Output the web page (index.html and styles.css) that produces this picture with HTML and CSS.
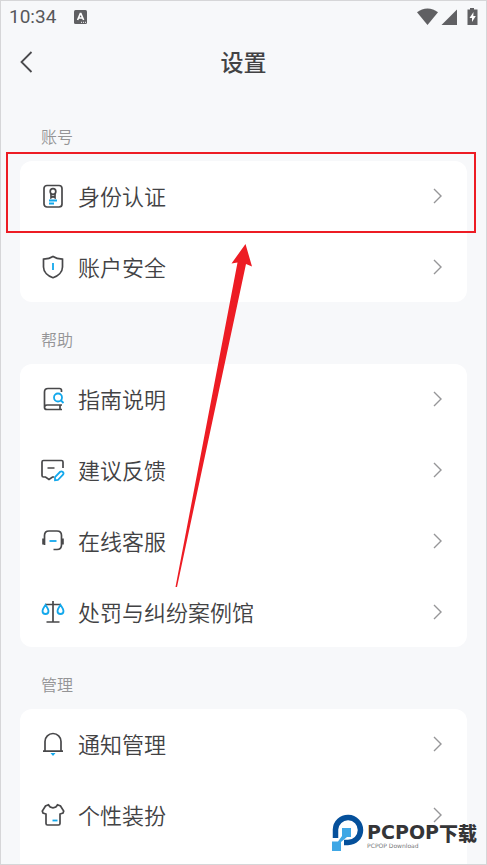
FILE: index.html
```html
<!DOCTYPE html>
<html lang="zh-CN">
<head>
<meta charset="utf-8">
<meta name="viewport" content="width=device-width, initial-scale=1">
<title>设置</title>
<link rel="stylesheet" href="styles.css">
</head>
<body>
<div class="screen">
  <div class="status">
    <span class="time">10:34</span>
    <svg class="status-app" width="13" height="14" viewBox="0 0 13 14"><rect width="13" height="14" rx="1.5" fill="#606063"/><path d="M3.6 10 6.3 3.6h.6L9.6 10M4.6 8h4" fill="none" stroke="#fff" stroke-width="1.6"/><path d="M7 12.3h1M9 12.3h1M11 12.3h1" stroke="#fff" stroke-width="1"/></svg>
    <svg class="status-icons" width="62" height="18" viewBox="0 0 62 18"><g fill="#606063"><path d="M0 4.300C6-.8 15-.8 21 4.300L10.500 17Z"/><path d="M40 1.500V17H24.500Z"/><path d="M53 0h4v1.500h3.500V17h-10V1.500H53Z"/></g><path d="M56.500 4 52.500 10h2.500v4l3.800-6h-2.500Z" fill="#fff"/></svg>
  </div>
  <header class="header">
    <button class="back" aria-label="返回"><svg width="14" height="22" viewBox="0 0 14 22"><path d="M12.500 1 2.500 11l10 10" fill="none" stroke="#4a4a4d" stroke-width="1.800"/></svg></button>
    <h1 class="title">设置</h1>
  </header>
  <main class="content">
    <h2 class="label">账号</h2>
    <nav class="card">
      <a class="row row-marked" href="#">
        <svg class="icon" viewBox="0 0 24 24"><rect x="3" y="1.500" width="18" height="21.500" rx="3"/><circle cx="12" cy="7.500" r="2.800"/><path d="M10 9.800v4L12 12.600l2 1.200v-4"/><path class="blue" d="M8 16.500h8M8 19.500h5"/></svg>
        <span class="name">身份认证</span><svg class="chevron" viewBox="0 0 10 16"><path d="M1 1 8 8 1 15"/></svg>
      </a>
      <a class="row" href="#">
        <svg class="icon" viewBox="0 0 24 24"><path d="M12 1.500C9.500 3.200 6 4 2.500 4.200V12c0 5 4.500 9 9.500 10.700C17 21 21.500 17 21.500 12V4.200C18 4 14.500 3.200 12 1.500Z"/><path class="blue" d="M12 8v7"/></svg>
        <span class="name">账户安全</span><svg class="chevron" viewBox="0 0 10 16"><path d="M1 1 8 8 1 15"/></svg>
      </a>
    </nav>
    <h2 class="label">帮助</h2>
    <nav class="card">
      <a class="row" href="#">
        <svg class="icon" viewBox="0 0 24 24"><path d="M20.500 5V3.500Q20.500 1.500 18.500 1.500H7Q3.500 1.500 3.500 5v15.500q0 2 2.500 2H21M3.500 20.500q0-2.500 2.500-2.500h15M19 18v4.500"/><circle class="blue" cx="17" cy="10.500" r="4"/><path class="blue" d="m20 13.500 2.500 2.500"/></svg>
        <span class="name">指南说明</span><svg class="chevron" viewBox="0 0 10 16"><path d="M1 1 8 8 1 15"/></svg>
      </a>
      <a class="row" href="#">
        <svg class="icon" viewBox="0 0 24 24"><path d="M22 10V4Q22 2.500 20.500 2.500h-18Q1 2.500 1 4v13.500Q1 19 2.500 19h2L8 21.500l3.500-2.500h1.500M6.500 10h7"/><path class="blue" d="M14 22.200v-3.200l5.200-5.200q1.300-1 2.600.2t.2 2.700L16.900 22Z"/></svg>
        <span class="name">建议反馈</span><svg class="chevron" viewBox="0 0 10 16"><path d="M1 1 8 8 1 15"/></svg>
      </a>
      <a class="row" href="#">
        <svg class="icon" viewBox="0 0 24 24"><path d="M3.500 16V6.500Q3.500 2 8 2h8q4.500 0 4.500 4.500V16q0 4.500-4.500 4.500h-3.500"/><path class="ear" d="M2.200 9.500v6M21.800 9.500v6"/><path class="blue" d="M8.500 12h7"/></svg>
        <span class="name">在线客服</span><svg class="chevron" viewBox="0 0 10 16"><path d="M1 1 8 8 1 15"/></svg>
      </a>
      <a class="row" href="#">
        <svg class="icon" viewBox="0 0 24 24"><path d="M12 1v21M5.500 22h13M4 4.500h16"/><path class="blue" d="M4.500 5C3 7.500 1.500 9 1.500 11a3 3 0 0 0 6 0C7.500 9 6 7.500 4.500 5ZM19.500 5c-1.500 2.500-3 4-3 6a3 3 0 0 0 6 0c0-2-1.500-3.500-3-6Z"/></svg>
        <span class="name">处罚与纠纷案例馆</span><svg class="chevron" viewBox="0 0 10 16"><path d="M1 1 8 8 1 15"/></svg>
      </a>
    </nav>
    <h2 class="label">管理</h2>
    <nav class="card card-last">
      <a class="row" href="#">
        <svg class="icon" viewBox="0 0 24 24"><path d="M4 19V9.500a8 8 0 0 1 16 0V19M2 19.200h20"/><path class="blue-fill" d="M9.500 21h5L12 24Z"/></svg>
        <span class="name">通知管理</span><svg class="chevron" viewBox="0 0 10 16"><path d="M1 1 8 8 1 15"/></svg>
      </a>
      <a class="row" href="#">
        <svg class="icon" viewBox="0 0 24 24"><path d="M7.500 1.800 4.500 3 1.300 8 2 10l3 1v9.500q0 1.500 1.500 1.500h11q1.500 0 1.500-1.500V11l3-1 .7-2L19.500 3l-3-1.200C15 5.800 9 5.800 7.500 1.800Z"/><path class="blue" d="M11.500 17.500h5"/></svg>
        <span class="name">个性装扮</span><svg class="chevron" viewBox="0 0 10 16"><path d="M1 1 8 8 1 15"/></svg>
      </a>
    </nav>
  </main>
  <svg class="arrow" width="78" height="344" viewBox="0 0 78 344"><path d="M71.500 0 78 22.500 72 20 3 343H1.500L63.500 18.500 57.500 19.500Z" fill="#ed1c24"/></svg>
  <div class="brand">
    <svg width="32" height="38" viewBox="0 0 32 38"><path d="M3.500 24V15.500A12.500 12.500 0 1 1 16 28.500H12" fill="none" stroke="#05509b" stroke-width="5.500"/><path d="M10 14h9v9h-4L9 28v9H0v-9.500h6L10 22Z" fill="#3fa7e5"/></svg>
    <div class="brand-text">
      <div class="brand-name">PCPOP<span class="brand-cn">下载</span></div>
      <div class="brand-sub">PCPOP Download</div>
    </div>
  </div>
</div>
</body>
</html>
```
FILE: styles.css
```css
* { box-sizing: border-box; }

body {
  margin: 0;
  font-family: "Noto Sans CJK SC", sans-serif;
  color: #424244;
}

.screen {
  position: relative;
  display: flex;
  flex-direction: column;
  height: 100vh;
  overflow: hidden;
  border: 1px solid #d6d6d8;
  background: #f7f8fa;
}

.status {
  display: flex;
  flex: none;
  align-items: center;
  height: 32px;
  padding: 0 7px 0 8px;
}

.time {
  font: 400 19px/22px Roboto, sans-serif;
  color: #58585b;
}

.status-app { margin-left: 18px; }
.status-icons { margin-left: auto; }

.header {
  display: grid;
  flex: none;
  grid-template-columns: 40px 1fr 40px;
  align-items: center;
  height: 66px;
  padding: 0 8px 8px;
}

.back {
  display: flex;
  padding: 4px 10px;
  border: 0;
  background: none;
}

.title {
  margin: 0;
  padding-bottom: 2px;
  font-size: 23px;
  font-weight: 500;
  line-height: 32px;
  text-align: center;
}

.content {
  display: flex;
  flex: 1;
  flex-direction: column;
  padding: 0 19px;
}

.label {
  flex: none;
  margin: 0;
  padding: 25px 21px 13px;
  font-size: 16px;
  font-weight: 350;
  line-height: 24px;
  color: #949496;
}

.card {
  display: flex;
  flex: none;
  flex-direction: column;
  gap: 1px;
  border-radius: 12px;
  background: #fff;
}

.card-last {
  flex: 1 0 auto;
  border-radius: 12px 12px 0 0;
}

.row {
  position: relative;
  display: flex;
  align-items: center;
  gap: 13px;
  height: 70px;
  padding: 0 24px 0 21px;
  color: inherit;
  text-decoration: none;
}

.row-marked::after {
  content: "";
  position: absolute;
  inset: -9px -9px -2px -14px;
  border: 2px solid #ed1c24;
}

.icon {
  flex: none;
  width: 24px;
  height: 24px;
  fill: none;
  stroke: #48484a;
  stroke-width: 1.7;
}

.icon .ear { stroke-width: 2; }
.icon .blue { stroke: #13a8ec; stroke-width: 1.8; }
.icon .blue-fill { fill: #13a8ec; stroke: none; }

.name {
  flex: 1;
  padding-bottom: 3px;
  font-size: 22px;
  font-weight: 350;
  line-height: 32px;
}

.chevron {
  width: 10px;
  height: 16px;
  fill: none;
  stroke: #969698;
  stroke-width: 1.4;
}

.arrow {
  position: absolute;
  top: 243px;
  left: 173px;
}

.brand {
  position: absolute;
  right: 9px;
  bottom: 12px;
  display: flex;
  gap: 3px;
}

.brand-text { padding-top: 9px; }

.brand-name {
  display: flex;
  font: 700 19px/19px "DejaVu Sans", sans-serif;
  color: #353537;
}

.brand-cn {
  font-family: "Noto Sans CJK SC", sans-serif;
  font-weight: 900;
}

.brand-sub {
  font: 6px/8px "DejaVu Sans", sans-serif;
  color: #77777a;
}
```
